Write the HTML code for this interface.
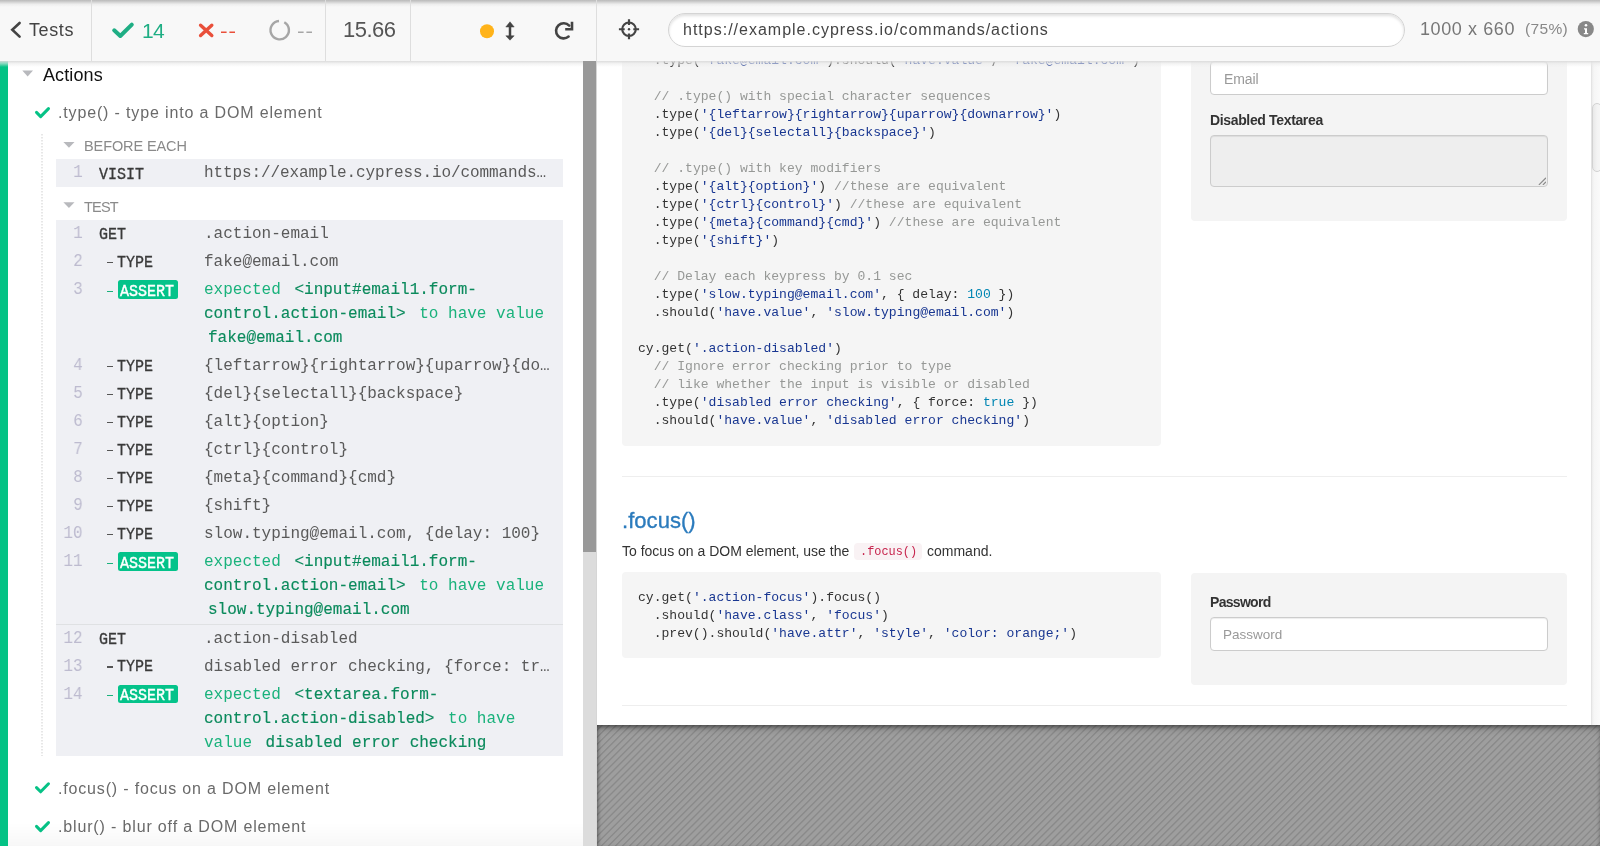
<!DOCTYPE html>
<html><head><meta charset="utf-8">
<style>
html,body{margin:0;padding:0;}
body{width:1600px;height:846px;overflow:hidden;position:relative;background:#fff;font-family:"Liberation Sans",sans-serif;}
.t{position:absolute;white-space:pre;will-change:transform;}
b{font-weight:normal;color:#0b8a5c;margin:0 4px;-webkit-text-stroke:0.15px #0b8a5c;}
</style></head><body>
<div style="position:absolute;left:0px;top:61px;width:7.5px;height:785px;background:#04c285"></div>
<svg style="position:absolute;left:0;top:0" width="600" height="846"><path d="M22.3 70.6 L33 70.6 L27.65 76.6 Z" fill="#b8b9bd"/><path d="M63.4 142 L74.5 142 L68.95 147.7 Z" fill="#b8b9bd"/><path d="M63.4 202.3 L74.5 202.3 L68.95 208 Z" fill="#b8b9bd"/><path d="M36.5 112.4 L40.65 116.6 L48.5 108.6" fill="none" stroke="#06c286" stroke-width="3" stroke-linecap="round" stroke-linejoin="round"/><path d="M36.5 787.6 L40.65 791.8 L48.5 783.8" fill="none" stroke="#06c286" stroke-width="3" stroke-linecap="round" stroke-linejoin="round"/><path d="M36.5 826.4 L40.65 830.6 L48.5 822.6" fill="none" stroke="#06c286" stroke-width="3" stroke-linecap="round" stroke-linejoin="round"/><line x1="42" y1="134" x2="42" y2="756" stroke="#cfcfcf" stroke-width="1" stroke-dasharray="1.5 1.5"/></svg>
<div class="t" style="left:42.5px;top:62.56px;font:normal 18px/25px 'Liberation Sans', sans-serif;color:#111;letter-spacing:0.1px;">Actions</div>
<div class="t" style="left:57.8px;top:102.46px;font:normal 16px/22px 'Liberation Sans', sans-serif;color:#6a6a6a;letter-spacing:0.85px;">.type() - type into a DOM element</div>
<div class="t" style="left:84.3px;top:136.28px;font:normal 14.5px/20px 'Liberation Sans', sans-serif;color:#8a8a8a;letter-spacing:-0.1px;">BEFORE EACH</div>
<div class="t" style="left:84px;top:196.58px;font:normal 14.5px/20px 'Liberation Sans', sans-serif;color:#8a8a8a;letter-spacing:-0.8px;">TEST</div>
<div class="t" style="left:57.6px;top:777.66px;font:normal 16px/22px 'Liberation Sans', sans-serif;color:#6a6a6a;letter-spacing:0.83px;">.focus() - focus on a DOM element</div>
<div class="t" style="left:57.6px;top:816.46px;font:normal 16px/22px 'Liberation Sans', sans-serif;color:#6a6a6a;letter-spacing:0.85px;">.blur() - blur off a DOM element</div>
<div style="position:absolute;left:56px;top:159px;width:507px;height:28px;background:#eff0f4"></div>
<div style="position:absolute;left:56px;top:220px;width:507px;height:536px;background:#eff0f4"></div>
<div style="position:absolute;left:56px;top:624px;width:507px;height:1px;background:#dfe1e3"></div>
<div class="t" style="left:72.0px;top:160.20px;font:normal 18px/25px 'Liberation Mono', monospace;color:#bdbbcf;letter-spacing:0px;transform:scaleX(0.889);transform-origin:100% 50%">1</div>
<div class="t" style="left:98.8px;top:165.00px;font:normal 15px/21px 'Liberation Mono', monospace;color:#3a3a3a;letter-spacing:0px;-webkit-text-stroke:0.3px #3a3a3a;transform:scaleY(1.12);transform-origin:0 70%">VISIT</div>
<div class="t" style="left:204px;top:162.24px;font:normal 16px/22px 'Liberation Mono', monospace;color:#5a5a5a;letter-spacing:-0.1px;">https://example.cypress.io/commands…</div>
<div class="t" style="left:72.0px;top:221.20px;font:normal 18px/25px 'Liberation Mono', monospace;color:#bdbbcf;letter-spacing:0px;transform:scaleX(0.889);transform-origin:100% 50%">1</div>
<div class="t" style="left:98.8px;top:224.50px;font:normal 15px/21px 'Liberation Mono', monospace;color:#3a3a3a;letter-spacing:0px;-webkit-text-stroke:0.3px #3a3a3a;transform:scaleY(1.12);transform-origin:0 70%">GET</div>
<div class="t" style="left:204px;top:223.24px;font:normal 16px/22px 'Liberation Mono', monospace;color:#5a5a5a;letter-spacing:0px;">.action-email</div>
<div class="t" style="left:72.0px;top:249.20px;font:normal 18px/25px 'Liberation Mono', monospace;color:#bdbbcf;letter-spacing:0px;transform:scaleX(0.889);transform-origin:100% 50%">2</div>
<div style="position:absolute;left:106.8px;top:261.9px;width:6.2px;height:1.3px;background:#555"></div>
<div class="t" style="left:116.8px;top:252.70px;font:normal 15px/21px 'Liberation Mono', monospace;color:#3a3a3a;letter-spacing:0px;-webkit-text-stroke:0.3px #3a3a3a;transform:scaleY(1.12);transform-origin:0 70%">TYPE</div>
<div class="t" style="left:204px;top:251.24px;font:normal 16px/22px 'Liberation Mono', monospace;color:#5a5a5a;letter-spacing:0px;">fake@email.com</div>
<div class="t" style="left:72.0px;top:277.20px;font:normal 18px/25px 'Liberation Mono', monospace;color:#bdbbcf;letter-spacing:0px;transform:scaleX(0.889);transform-origin:100% 50%">3</div>
<div style="position:absolute;left:106.8px;top:290.7px;width:6.2px;height:1.3px;background:#1ab27c"></div>
<div style="position:absolute;left:117.6px;top:280px;width:60.4px;height:18.5px;background:#04c38a;border-radius:2.5px"></div>
<div class="t" style="left:120.2px;top:281.60px;font:normal 15px/21px 'Liberation Mono', monospace;color:#fff;letter-spacing:0px;-webkit-text-stroke:0.35px #fff;transform:scaleY(1.12);transform-origin:0 70%">ASSERT</div>
<div class="t" style="left:204px;top:279.24px;font:normal 16px/22px 'Liberation Mono', monospace;color:#1ab27c;letter-spacing:0px;">expected <b style="margin-right:0">&lt;input#email1.form-</b></div>
<div class="t" style="left:204px;top:303.24px;font:normal 16px/22px 'Liberation Mono', monospace;color:#1ab27c;letter-spacing:0px;"><b style="margin-left:0">control.action-email&gt;</b> to have value</div>
<div class="t" style="left:204px;top:327.24px;font:normal 16px/22px 'Liberation Mono', monospace;color:#1ab27c;letter-spacing:0px;"><b>fake@email.com</b></div>
<div class="t" style="left:72.0px;top:353.20px;font:normal 18px/25px 'Liberation Mono', monospace;color:#bdbbcf;letter-spacing:0px;transform:scaleX(0.889);transform-origin:100% 50%">4</div>
<div style="position:absolute;left:106.8px;top:365.9px;width:6.2px;height:1.3px;background:#555"></div>
<div class="t" style="left:116.8px;top:356.70px;font:normal 15px/21px 'Liberation Mono', monospace;color:#3a3a3a;letter-spacing:0px;-webkit-text-stroke:0.3px #3a3a3a;transform:scaleY(1.12);transform-origin:0 70%">TYPE</div>
<div class="t" style="left:204px;top:355.24px;font:normal 16px/22px 'Liberation Mono', monospace;color:#5a5a5a;letter-spacing:0px;">{leftarrow}{rightarrow}{uparrow}{do…</div>
<div class="t" style="left:72.0px;top:381.20px;font:normal 18px/25px 'Liberation Mono', monospace;color:#bdbbcf;letter-spacing:0px;transform:scaleX(0.889);transform-origin:100% 50%">5</div>
<div style="position:absolute;left:106.8px;top:393.9px;width:6.2px;height:1.3px;background:#555"></div>
<div class="t" style="left:116.8px;top:384.70px;font:normal 15px/21px 'Liberation Mono', monospace;color:#3a3a3a;letter-spacing:0px;-webkit-text-stroke:0.3px #3a3a3a;transform:scaleY(1.12);transform-origin:0 70%">TYPE</div>
<div class="t" style="left:204px;top:383.24px;font:normal 16px/22px 'Liberation Mono', monospace;color:#5a5a5a;letter-spacing:0px;">{del}{selectall}{backspace}</div>
<div class="t" style="left:72.0px;top:409.20px;font:normal 18px/25px 'Liberation Mono', monospace;color:#bdbbcf;letter-spacing:0px;transform:scaleX(0.889);transform-origin:100% 50%">6</div>
<div style="position:absolute;left:106.8px;top:421.9px;width:6.2px;height:1.3px;background:#555"></div>
<div class="t" style="left:116.8px;top:412.70px;font:normal 15px/21px 'Liberation Mono', monospace;color:#3a3a3a;letter-spacing:0px;-webkit-text-stroke:0.3px #3a3a3a;transform:scaleY(1.12);transform-origin:0 70%">TYPE</div>
<div class="t" style="left:204px;top:411.24px;font:normal 16px/22px 'Liberation Mono', monospace;color:#5a5a5a;letter-spacing:0px;">{alt}{option}</div>
<div class="t" style="left:72.0px;top:437.20px;font:normal 18px/25px 'Liberation Mono', monospace;color:#bdbbcf;letter-spacing:0px;transform:scaleX(0.889);transform-origin:100% 50%">7</div>
<div style="position:absolute;left:106.8px;top:449.9px;width:6.2px;height:1.3px;background:#555"></div>
<div class="t" style="left:116.8px;top:440.70px;font:normal 15px/21px 'Liberation Mono', monospace;color:#3a3a3a;letter-spacing:0px;-webkit-text-stroke:0.3px #3a3a3a;transform:scaleY(1.12);transform-origin:0 70%">TYPE</div>
<div class="t" style="left:204px;top:439.24px;font:normal 16px/22px 'Liberation Mono', monospace;color:#5a5a5a;letter-spacing:0px;">{ctrl}{control}</div>
<div class="t" style="left:72.0px;top:465.20px;font:normal 18px/25px 'Liberation Mono', monospace;color:#bdbbcf;letter-spacing:0px;transform:scaleX(0.889);transform-origin:100% 50%">8</div>
<div style="position:absolute;left:106.8px;top:477.9px;width:6.2px;height:1.3px;background:#555"></div>
<div class="t" style="left:116.8px;top:468.70px;font:normal 15px/21px 'Liberation Mono', monospace;color:#3a3a3a;letter-spacing:0px;-webkit-text-stroke:0.3px #3a3a3a;transform:scaleY(1.12);transform-origin:0 70%">TYPE</div>
<div class="t" style="left:204px;top:467.24px;font:normal 16px/22px 'Liberation Mono', monospace;color:#5a5a5a;letter-spacing:0px;">{meta}{command}{cmd}</div>
<div class="t" style="left:72.0px;top:493.20px;font:normal 18px/25px 'Liberation Mono', monospace;color:#bdbbcf;letter-spacing:0px;transform:scaleX(0.889);transform-origin:100% 50%">9</div>
<div style="position:absolute;left:106.8px;top:505.9px;width:6.2px;height:1.3px;background:#555"></div>
<div class="t" style="left:116.8px;top:496.70px;font:normal 15px/21px 'Liberation Mono', monospace;color:#3a3a3a;letter-spacing:0px;-webkit-text-stroke:0.3px #3a3a3a;transform:scaleY(1.12);transform-origin:0 70%">TYPE</div>
<div class="t" style="left:204px;top:495.24px;font:normal 16px/22px 'Liberation Mono', monospace;color:#5a5a5a;letter-spacing:0px;">{shift}</div>
<div class="t" style="left:61.199999999999996px;top:521.20px;font:normal 18px/25px 'Liberation Mono', monospace;color:#bdbbcf;letter-spacing:0px;transform:scaleX(0.889);transform-origin:100% 50%">10</div>
<div style="position:absolute;left:106.8px;top:533.9px;width:6.2px;height:1.3px;background:#555"></div>
<div class="t" style="left:116.8px;top:524.70px;font:normal 15px/21px 'Liberation Mono', monospace;color:#3a3a3a;letter-spacing:0px;-webkit-text-stroke:0.3px #3a3a3a;transform:scaleY(1.12);transform-origin:0 70%">TYPE</div>
<div class="t" style="left:204px;top:523.24px;font:normal 16px/22px 'Liberation Mono', monospace;color:#5a5a5a;letter-spacing:0px;">slow.typing@email.com, {delay: 100}</div>
<div class="t" style="left:61.199999999999996px;top:549.20px;font:normal 18px/25px 'Liberation Mono', monospace;color:#bdbbcf;letter-spacing:0px;transform:scaleX(0.889);transform-origin:100% 50%">11</div>
<div style="position:absolute;left:106.8px;top:562.6999999999999px;width:6.2px;height:1.3px;background:#1ab27c"></div>
<div style="position:absolute;left:117.6px;top:552px;width:60.4px;height:18.5px;background:#04c38a;border-radius:2.5px"></div>
<div class="t" style="left:120.2px;top:553.60px;font:normal 15px/21px 'Liberation Mono', monospace;color:#fff;letter-spacing:0px;-webkit-text-stroke:0.35px #fff;transform:scaleY(1.12);transform-origin:0 70%">ASSERT</div>
<div class="t" style="left:204px;top:551.24px;font:normal 16px/22px 'Liberation Mono', monospace;color:#1ab27c;letter-spacing:0px;">expected <b style="margin-right:0">&lt;input#email1.form-</b></div>
<div class="t" style="left:204px;top:575.24px;font:normal 16px/22px 'Liberation Mono', monospace;color:#1ab27c;letter-spacing:0px;"><b style="margin-left:0">control.action-email&gt;</b> to have value</div>
<div class="t" style="left:204px;top:599.24px;font:normal 16px/22px 'Liberation Mono', monospace;color:#1ab27c;letter-spacing:0px;"><b>slow.typing@email.com</b></div>
<div class="t" style="left:61.199999999999996px;top:626.20px;font:normal 18px/25px 'Liberation Mono', monospace;color:#bdbbcf;letter-spacing:0px;transform:scaleX(0.889);transform-origin:100% 50%">12</div>
<div class="t" style="left:98.8px;top:629.50px;font:normal 15px/21px 'Liberation Mono', monospace;color:#3a3a3a;letter-spacing:0px;-webkit-text-stroke:0.3px #3a3a3a;transform:scaleY(1.12);transform-origin:0 70%">GET</div>
<div class="t" style="left:204px;top:628.24px;font:normal 16px/22px 'Liberation Mono', monospace;color:#5a5a5a;letter-spacing:0px;">.action-disabled</div>
<div class="t" style="left:61.199999999999996px;top:653.70px;font:normal 18px/25px 'Liberation Mono', monospace;color:#bdbbcf;letter-spacing:0px;transform:scaleX(0.889);transform-origin:100% 50%">13</div>
<div style="position:absolute;left:106.8px;top:666.4px;width:6.2px;height:1.3px;background:#555"></div>
<div class="t" style="left:116.8px;top:657.20px;font:normal 15px/21px 'Liberation Mono', monospace;color:#3a3a3a;letter-spacing:0px;-webkit-text-stroke:0.3px #3a3a3a;transform:scaleY(1.12);transform-origin:0 70%">TYPE</div>
<div class="t" style="left:204px;top:655.74px;font:normal 16px/22px 'Liberation Mono', monospace;color:#5a5a5a;letter-spacing:0px;">disabled error checking, {force: tr…</div>
<div class="t" style="left:61.199999999999996px;top:681.70px;font:normal 18px/25px 'Liberation Mono', monospace;color:#bdbbcf;letter-spacing:0px;transform:scaleX(0.889);transform-origin:100% 50%">14</div>
<div style="position:absolute;left:106.8px;top:695.1999999999999px;width:6.2px;height:1.3px;background:#1ab27c"></div>
<div style="position:absolute;left:117.6px;top:684.5px;width:60.4px;height:18.5px;background:#04c38a;border-radius:2.5px"></div>
<div class="t" style="left:120.2px;top:686.10px;font:normal 15px/21px 'Liberation Mono', monospace;color:#fff;letter-spacing:0px;-webkit-text-stroke:0.35px #fff;transform:scaleY(1.12);transform-origin:0 70%">ASSERT</div>
<div class="t" style="left:204px;top:683.74px;font:normal 16px/22px 'Liberation Mono', monospace;color:#1ab27c;letter-spacing:0px;">expected <b style="margin-right:0">&lt;textarea.form-</b></div>
<div class="t" style="left:204px;top:707.74px;font:normal 16px/22px 'Liberation Mono', monospace;color:#1ab27c;letter-spacing:0px;"><b style="margin-left:0">control.action-disabled&gt;</b> to have</div>
<div class="t" style="left:204px;top:731.74px;font:normal 16px/22px 'Liberation Mono', monospace;color:#1ab27c;letter-spacing:0px;">value <b>disabled error checking</b></div>
<div style="position:absolute;left:7.5px;top:822px;width:575.5px;height:24px;background:linear-gradient(rgba(0,0,0,0),rgba(0,0,0,0.01) 40%,rgba(0,0,0,0.03))"></div>
<div style="position:absolute;left:597px;top:61px;width:1003px;height:664px;background:#fff;overflow:hidden">
<div style="position:absolute;left:25px;top:-41px;width:539px;height:426px;background:#f5f5f5;border-radius:4px"></div>
<div class="t" style="left:41.299999999999955px;top:-9.38px;font:normal 13.07px/18px 'Liberation Mono', monospace;color:#333;letter-spacing:0px;white-space:pre">  .type(<span style="color:#183691">'fake@email.com'</span>).should(<span style="color:#183691">'have.value'</span>, <span style="color:#183691">'fake@email.com'</span>)</div>
<div class="t" style="left:41.299999999999955px;top:26.62px;font:normal 13.07px/18px 'Liberation Mono', monospace;color:#333;letter-spacing:0px;white-space:pre">  <span style="color:#969896">// .type() with special character sequences</span></div>
<div class="t" style="left:41.299999999999955px;top:44.62px;font:normal 13.07px/18px 'Liberation Mono', monospace;color:#333;letter-spacing:0px;white-space:pre">  .type(<span style="color:#183691">'{leftarrow}{rightarrow}{uparrow}{downarrow}'</span>)</div>
<div class="t" style="left:41.299999999999955px;top:62.62px;font:normal 13.07px/18px 'Liberation Mono', monospace;color:#333;letter-spacing:0px;white-space:pre">  .type(<span style="color:#183691">'{del}{selectall}{backspace}'</span>)</div>
<div class="t" style="left:41.299999999999955px;top:98.62px;font:normal 13.07px/18px 'Liberation Mono', monospace;color:#333;letter-spacing:0px;white-space:pre">  <span style="color:#969896">// .type() with key modifiers</span></div>
<div class="t" style="left:41.299999999999955px;top:116.62px;font:normal 13.07px/18px 'Liberation Mono', monospace;color:#333;letter-spacing:0px;white-space:pre">  .type(<span style="color:#183691">'{alt}{option}'</span>) <span style="color:#969896">//these are equivalent</span></div>
<div class="t" style="left:41.299999999999955px;top:134.62px;font:normal 13.07px/18px 'Liberation Mono', monospace;color:#333;letter-spacing:0px;white-space:pre">  .type(<span style="color:#183691">'{ctrl}{control}'</span>) <span style="color:#969896">//these are equivalent</span></div>
<div class="t" style="left:41.299999999999955px;top:152.62px;font:normal 13.07px/18px 'Liberation Mono', monospace;color:#333;letter-spacing:0px;white-space:pre">  .type(<span style="color:#183691">'{meta}{command}{cmd}'</span>) <span style="color:#969896">//these are equivalent</span></div>
<div class="t" style="left:41.299999999999955px;top:170.62px;font:normal 13.07px/18px 'Liberation Mono', monospace;color:#333;letter-spacing:0px;white-space:pre">  .type(<span style="color:#183691">'{shift}'</span>)</div>
<div class="t" style="left:41.299999999999955px;top:206.62px;font:normal 13.07px/18px 'Liberation Mono', monospace;color:#333;letter-spacing:0px;white-space:pre">  <span style="color:#969896">// Delay each keypress by 0.1 sec</span></div>
<div class="t" style="left:41.299999999999955px;top:224.62px;font:normal 13.07px/18px 'Liberation Mono', monospace;color:#333;letter-spacing:0px;white-space:pre">  .type(<span style="color:#183691">'slow.typing@email.com'</span>, { delay: <span style="color:#0086b3">100</span> })</div>
<div class="t" style="left:41.299999999999955px;top:242.62px;font:normal 13.07px/18px 'Liberation Mono', monospace;color:#333;letter-spacing:0px;white-space:pre">  .should(<span style="color:#183691">'have.value'</span>, <span style="color:#183691">'slow.typing@email.com'</span>)</div>
<div class="t" style="left:41.299999999999955px;top:278.62px;font:normal 13.07px/18px 'Liberation Mono', monospace;color:#333;letter-spacing:0px;white-space:pre">cy.get(<span style="color:#183691">'.action-disabled'</span>)</div>
<div class="t" style="left:41.299999999999955px;top:296.62px;font:normal 13.07px/18px 'Liberation Mono', monospace;color:#333;letter-spacing:0px;white-space:pre">  <span style="color:#969896">// Ignore error checking prior to type</span></div>
<div class="t" style="left:41.299999999999955px;top:314.62px;font:normal 13.07px/18px 'Liberation Mono', monospace;color:#333;letter-spacing:0px;white-space:pre">  <span style="color:#969896">// like whether the input is visible or disabled</span></div>
<div class="t" style="left:41.299999999999955px;top:332.62px;font:normal 13.07px/18px 'Liberation Mono', monospace;color:#333;letter-spacing:0px;white-space:pre">  .type(<span style="color:#183691">'disabled error checking'</span>, { force: <span style="color:#0086b3">true</span> })</div>
<div class="t" style="left:41.299999999999955px;top:350.62px;font:normal 13.07px/18px 'Liberation Mono', monospace;color:#333;letter-spacing:0px;white-space:pre">  .should(<span style="color:#183691">'have.value'</span>, <span style="color:#183691">'disabled error checking'</span>)</div>
<div style="position:absolute;left:594px;top:-41px;width:376px;height:201px;background:#f4f4f4;border-radius:4px"></div>
<div style="position:absolute;left:613px;top:0.29999999999999716px;width:338px;height:33.5px;background:#fff;border:1px solid #ccc;border-radius:4px;box-sizing:border-box;box-shadow:inset 0 1px 1px rgba(0,0,0,.075)"></div>
<div class="t" style="left:626.7px;top:7.65px;font:normal 14px/20px 'Liberation Sans', sans-serif;color:#999;letter-spacing:-0.1px;">Email</div>
<div class="t" style="left:613.3px;top:49.15px;font:bold 14px/20px 'Liberation Sans', sans-serif;color:#333;letter-spacing:-0.35px;">Disabled Textarea</div>
<div style="position:absolute;left:613px;top:73.5px;width:338px;height:52.3px;background:#eee;border:1px solid #ccc;border-radius:4px;box-sizing:border-box;box-shadow:inset 0 1px 1px rgba(0,0,0,.075)"></div>
<svg style="position:absolute;left:939px;top:114px" width="10" height="10"><path d="M3.2 9.6 L9.6 3.2 M7.2 9.6 L9.6 7.2" stroke="#8a8a8a" stroke-width="1.2" stroke-linecap="round"/></svg>
<div style="position:absolute;left:25px;top:415px;width:945px;height:1px;background:#eee"></div>
<div class="t" style="left:24.5px;top:443.88px;font:normal 22px/31px 'Liberation Sans', sans-serif;color:#2b7bbd;letter-spacing:0.05px;-webkit-text-stroke:0.35px #2b7bbd">.focus()</div>
<div class="t" style="left:25px;top:479.65px;font:normal 14px/20px 'Liberation Sans', sans-serif;color:#333;letter-spacing:0px;">To focus on a DOM element, use the</div>
<div style="position:absolute;left:256.70000000000005px;top:481.5px;width:68.8px;height:17.5px;background:#f9f2f4;border-radius:4px"></div>
<div class="t" style="left:263px;top:482.83px;font:normal 11.9px/17px 'Liberation Mono', monospace;color:#c7254e;letter-spacing:0px;">.focus()</div>
<div class="t" style="left:330px;top:479.65px;font:normal 14px/20px 'Liberation Sans', sans-serif;color:#333;letter-spacing:0px;">command.</div>
<div style="position:absolute;left:25px;top:510.6px;width:539px;height:86px;background:#f5f5f5;border-radius:4px"></div>
<div class="t" style="left:41.299999999999955px;top:527.52px;font:normal 13.07px/18px 'Liberation Mono', monospace;color:#333;letter-spacing:0px;white-space:pre">cy.get(<span style="color:#183691">'.action-focus'</span>).focus()</div>
<div class="t" style="left:41.299999999999955px;top:545.52px;font:normal 13.07px/18px 'Liberation Mono', monospace;color:#333;letter-spacing:0px;white-space:pre">  .should(<span style="color:#183691">'have.class'</span>, <span style="color:#183691">'focus'</span>)</div>
<div class="t" style="left:41.299999999999955px;top:563.52px;font:normal 13.07px/18px 'Liberation Mono', monospace;color:#333;letter-spacing:0px;white-space:pre">  .prev().should(<span style="color:#183691">'have.attr'</span>, <span style="color:#183691">'style'</span>, <span style="color:#183691">'color: orange;'</span>)</div>
<div style="position:absolute;left:594px;top:512px;width:376px;height:111.6px;background:#f4f4f4;border-radius:4px"></div>
<div class="t" style="left:613.2px;top:530.75px;font:bold 14px/20px 'Liberation Sans', sans-serif;color:#333;letter-spacing:-0.7px;">Password</div>
<div style="position:absolute;left:613px;top:556px;width:338px;height:33.5px;background:#fff;border:1px solid #ccc;border-radius:4px;box-sizing:border-box;box-shadow:inset 0 1px 1px rgba(0,0,0,.075)"></div>
<div class="t" style="left:626.2px;top:563.62px;font:normal 13.5px/19px 'Liberation Sans', sans-serif;color:#999;letter-spacing:0px;">Password</div>
<div style="position:absolute;left:25px;top:644px;width:945px;height:1px;background:#eee"></div>
<div style="position:absolute;left:994px;top:0px;width:9px;height:664px;background:linear-gradient(90deg,#dcdcdc 0,#ececec 1px,#f6f6f6 3px,#fafafa)"></div>
<div style="position:absolute;left:994.5px;top:41.5px;width:10px;height:69px;background:linear-gradient(90deg,#e8e8e8,#f3f3f3 4px,#f6f6f6);border:1px solid #d2d2d2;box-sizing:border-box;border-radius:5px"></div>
</div>
<div style="position:absolute;left:597px;top:725px;width:1003px;height:121px;background:repeating-linear-gradient(135deg,#9e9e9e 0px,#9e9e9e 2.7px,#8a8a8a 3.5px,#8a8a8a 4.0px,#9e9e9e 4.99px);box-shadow:inset 0 3px 4px -1px rgba(0,0,0,.4),inset 0 7px 8px -4px rgba(0,0,0,.2),inset 3px 0 4px -2px rgba(0,0,0,.25)"></div>
<div style="position:absolute;left:0px;top:0px;width:1600px;height:61px;background:#f8f8f8"></div>
<div style="position:absolute;left:0px;top:0px;width:1600px;height:7px;background:linear-gradient(#bbbbbb,#c4c4c4 14%,#dcdcdc 40%,#eeeeee 62%,#f8f8f8)"></div>
<div style="position:absolute;left:0px;top:61px;width:1600px;height:6px;background:linear-gradient(rgba(218,218,218,0.95),rgba(235,235,235,0.55) 45%,rgba(255,255,255,0))"></div>
<div style="position:absolute;left:91px;top:0px;width:1px;height:61px;background:#dedede"></div>
<div style="position:absolute;left:325px;top:0px;width:1px;height:61px;background:#dedede"></div>
<div style="position:absolute;left:410px;top:0px;width:1px;height:61px;background:#dedede"></div>
<div style="position:absolute;left:596px;top:0px;width:1px;height:61px;background:#dedede"></div>
<div style="position:absolute;left:583px;top:61px;width:13px;height:491px;background:#999"></div>
<div style="position:absolute;left:583px;top:552px;width:13px;height:294px;background:#dcdcdc"></div>
<div style="position:absolute;left:596px;top:61px;width:1px;height:785px;background:#d6d6d6"></div>
<svg style="position:absolute;left:0;top:0" width="1600" height="61"><path d="M19.6 23 L12.3 29.8 L19.6 36.6" fill="none" stroke="#444" stroke-width="2.6" stroke-linecap="round"/><path d="M114.2 30.3 L120.3 36 L131.8 24.6" fill="none" stroke="#1fae84" stroke-width="4" stroke-linecap="round" stroke-linejoin="round"/><path d="M200.6 25.2 L211.8 35.5 M211.8 25.2 L200.6 35.5" fill="none" stroke="#e94f3a" stroke-width="3.4" stroke-linecap="round"/><path d="M221 32.3 L226.6 32.3 M229.4 32.3 L235 32.3" stroke="#e94f3a" stroke-width="1.6"/><path d="M284.3 22.2 A9.2 9.2 0 1 1 279 21" fill="none" stroke="#a6a6a6" stroke-width="2.4"/><path d="M298 32.3 L303.6 32.3 M306.4 32.3 L312 32.3" stroke="#a6a6a6" stroke-width="1.6"/><circle cx="487" cy="31.3" r="7" fill="#ffb31a"/><path d="M510 25.5 L510 37" stroke="#444" stroke-width="2.5"/><path d="M505.8 27 L510 21.8 L514.2 27 Z M505.8 35.8 L510 40.2 L514.2 35.8 Z" fill="#444" stroke="#444" stroke-width="0.5" stroke-linejoin="round"/><path d="M569.2 25.6 A7.6 7.6 0 1 0 568.6 36.6" fill="none" stroke="#444" stroke-width="2.6" stroke-linecap="round"/><path d="M565.2 29.2 L572 29.2 L572 21.8" fill="none" stroke="#444" stroke-width="2.6" stroke-linecap="butt" stroke-linejoin="miter"/><circle cx="629" cy="29.25" r="6.8" fill="none" stroke="#444" stroke-width="2.1"/><path d="M629 19.2 L629 25 M629 33.5 L629 39.3 M618.9 29.25 L624.7 29.25 M633.3 29.25 L639.1 29.25" stroke="#444" stroke-width="2.2"/><circle cx="629" cy="29.25" r="1.2" fill="#444"/><circle cx="1585.8" cy="29.1" r="8.1" fill="#888"/><circle cx="1586" cy="25.3" r="1.3" fill="#fff"/><path d="M1584 28.2 L1587 28.2 L1587 33 L1588.2 33 L1588.2 34.3 L1583.8 34.3 L1583.8 33 L1585 33 L1585 29.5 L1584 29.5 Z" fill="#fff"/></svg>
<div class="t" style="left:29px;top:17.86px;font:normal 18px/25px 'Liberation Sans', sans-serif;color:#444;letter-spacing:0.6px;">Tests</div>
<div class="t" style="left:142px;top:16.22px;font:normal 21px/29px 'Liberation Sans', sans-serif;color:#1fae84;letter-spacing:-0.6px;">14</div>
<div class="t" style="left:342.5px;top:14.18px;font:normal 22px/31px 'Liberation Sans', sans-serif;color:#555;letter-spacing:-0.5px;">15.66</div>
<div style="position:absolute;left:667.5px;top:13.2px;width:737px;height:34.1px;background:#fff;border:1px solid #d4d4d4;border-radius:17px;box-sizing:border-box;box-shadow:inset 0 2px 3px rgba(0,0,0,.12)"></div>
<div class="t" style="left:682.5px;top:19.16px;font:normal 16px/22px 'Liberation Sans', sans-serif;color:#444;letter-spacing:1.0px;">https://example.cypress.io/commands/actions</div>
<div class="t" style="left:1419.5px;top:16.76px;font:normal 18px/25px 'Liberation Sans', sans-serif;color:#777;letter-spacing:0.6px;">1000 x 660</div>
<div class="t" style="left:1524.5px;top:17.93px;font:normal 15.5px/22px 'Liberation Sans', sans-serif;color:#888;letter-spacing:0.35px;">(75%)</div>
</body></html>
